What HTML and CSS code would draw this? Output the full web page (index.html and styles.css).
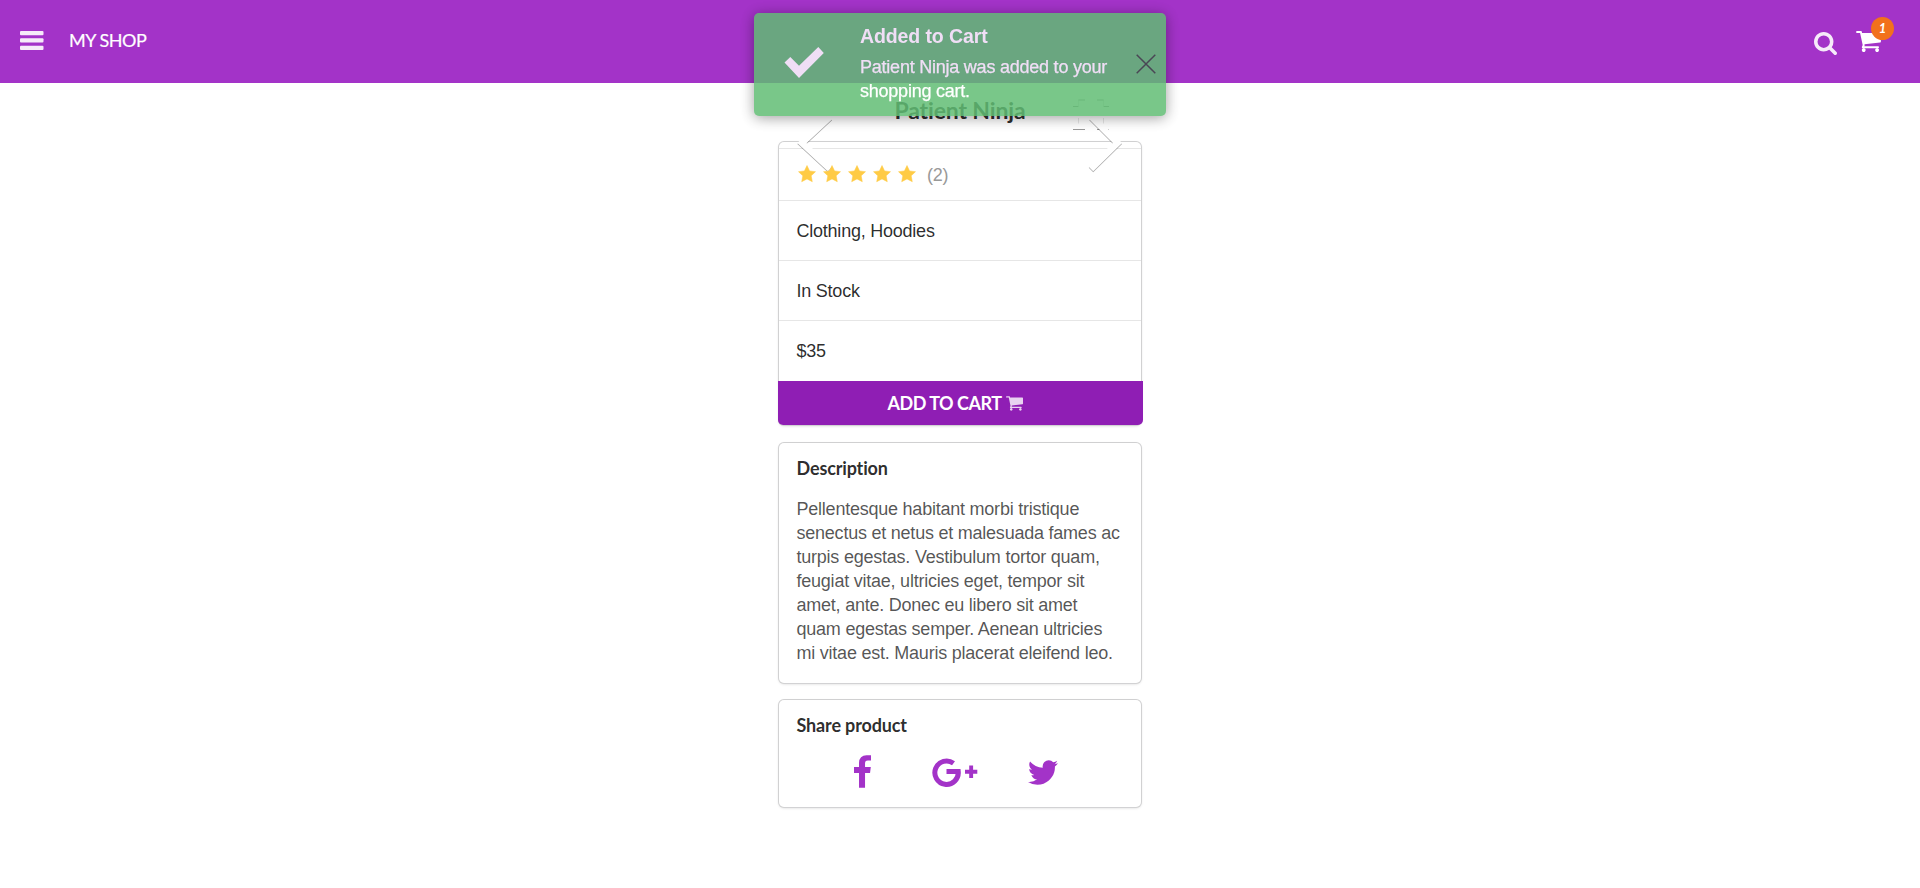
FILE: index.html
```html
<!DOCTYPE html>
<html lang="en">
<head>
<meta charset="utf-8">
<title>My Shop</title>
<link rel="stylesheet" href="styles.css">
</head>
<body>
<header class="topbar">
  <svg class="bars" viewBox="0 0 24 20"><rect y="0" width="23.5" height="4.3" rx="1"/><rect y="7.3" width="23.5" height="4.3" rx="1"/><rect y="14.8" width="23.5" height="4.3" rx="1"/></svg>
  <a class="brand">MY SHOP</a>
  <div class="actions">
    <svg class="search" viewBox="64 128 1664 1664"><path d="M1216 832q0-185-131.5-316.500t-316.500-131.500-316.500 131.500-131.500 316.500 131.500 316.500 316.500 131.500 316.500-131.500 131.500-316.500zm512 832q0 52-38 90t-90 38q-54 0-90-38l-343-342q-179 124-399 124-143 0-273.500-55.500t-225-150-150-225-55.500-273.500 55.500-273.500 150-225 225-150 273.500-55.500 273.500 55.500 225 150 150 225 55.500 273.500q0 220-124 399l343 343q37 37 37 90z"/></svg>
    <div class="cart">
      <svg viewBox="64 256 1664 1408"><path d="M704 1536q0 52-38 90t-90 38-90-38-38-90 38-90 90-38 90 38 38 90zm896 0q0 52-38 90t-90 38-90-38-38-90 38-90 90-38 90 38 38 90zm128-1088v512q0 24-16.500 42.500t-40.500 21.500l-1044 122q13 60 13 70 0 16-24 64h920q26 0 45 19t19 45-19 45-45 19h-1024q-26 0-45-19t-19-45q0-11 8-31.500t16-36 21.500-40 15.500-29.500l-177-823h-204q-26 0-45-19t-19-45 19-45 45-19h256q16 0 28.500 6.500t19.500 15.500 13 24.500 8 26 5.500 29.500 4.500 26h1201q26 0 45 19t19 45z"/></svg>
      <span class="badge">1</span>
    </div>
  </div>
</header>

<main class="product">
  <h2 class="title">Patient Ninja</h2>
  <section class="card">
    <div class="gallery">
      <svg class="gallery-nav" viewBox="0 0 366 80">
        <path class="corners" d="M298.700 11V1.700H308M320 1.700h9.300V11M298.700 22v9.300H308M320 31.300h9.300V22"/>
        <path class="arrow" d="M53 22L25 48L53 74"/>
        <path class="arrow" d="M314.500 22L340.500 48L314 74"/>
      </svg>
    </div>
    <div class="row rating">
      <svg class="stars" viewBox="0 0 120 18"><defs><path id="star" d="M9 .5l2.600 5.400 5.900.8-4.300 4.100 1.100 5.900L9 13.900l-5.300 2.800 1.100-5.900L.5 6.700l5.900-.8z"/></defs><use href="#star"/><use href="#star" x="25"/><use href="#star" x="50"/><use href="#star" x="75"/><use href="#star" x="100"/></svg>
      <span class="count">(2)</span>
    </div>
    <div class="row">Clothing, Hoodies</div>
    <div class="row">In Stock</div>
    <div class="row price">$35</div>
    <button class="add">ADD TO CART <svg viewBox="64 256 1664 1408"><path d="M704 1536q0 52-38 90t-90 38-90-38-38-90 38-90 90-38 90 38 38 90zm896 0q0 52-38 90t-90 38-90-38-38-90 38-90 90-38 90 38 38 90zm128-1088v512q0 24-16.500 42.500t-40.500 21.500l-1044 122q13 60 13 70 0 16-24 64h920q26 0 45 19t19 45-19 45-45 19h-1024q-26 0-45-19t-19-45q0-11 8-31.500t16-36 21.500-40 15.500-29.500l-177-823h-204q-26 0-45-19t-19-45 19-45 45-19h256q16 0 28.500 6.500t19.500 15.500 13 24.500 8 26 5.500 29.500 4.500 26h1201q26 0 45 19t19 45z"/></svg></button>
  </section>

  <section class="card description">
    <h3>Description</h3>
    <p>Pellentesque habitant morbi tristique<br>senectus et netus et malesuada fames ac<br>turpis egestas. Vestibulum tortor quam,<br>feugiat vitae, ultricies eget, tempor sit<br>amet, ante. Donec eu libero sit amet<br>quam egestas semper. Aenean ultricies<br>mi vitae est. Mauris placerat eleifend leo.</p>
  </section>

  <section class="card share">
    <h3>Share product</h3>
    <div class="networks">
      <svg class="facebook" viewBox="479 0 864 1664"><path d="M1343 12v264h-157q-86 0-116 36t-30 108v189h293l-39 296h-254v759h-306v-759h-255v-296h255v-218q0-186 104-288.500t277-102.500q147 0 228 12z"/></svg>
      <svg class="google" viewBox="0 0 46 30"><path class="ring" d="M21.500 6.300A11.700 11.700 0 1 0 26.200 14.500H15"/><path d="M14.500 12h13.600v5H14.500zM33 12.800h4.200V8.500h3.900v4.300h4.200v3.900h-4.200V21h-3.900v-4.300H33z"/></svg>
      <svg class="twitter" viewBox="108 256 1576 1280"><path d="M1684 408q-67 98-162 167 1 14 1 42 0 130-38 259.500t-115.500 248.500-184.500 210.500-258 146-323 54.500q-271 0-496-145 35 4 78 4 225 0 401-138-105-2-188-64.500t-114-159.500q33 5 61 5 43 0 85-11-112-23-185.500-111.500t-73.500-205.500v-4q68 38 146 41-66-44-105-115t-39-154q0-88 44-163 121 149 294.500 238.500t371.500 99.500q-8-38-8-74 0-134 94.500-228.500t228.500-94.500q140 0 236 102 109-21 205-78-37 115-142 178 93-10 186-50z"/></svg>
    </div>
  </section>
</main>

<aside class="toast">
  <svg class="check" viewBox="0 0 40 32"><path d="M.5 15.500L6.300 10l8.700 8.700L34.300 0l5.500 6L15 31z"/></svg>
  <div class="message">
    <strong>Added to Cart</strong>
    <p>Patient Ninja was added to your<br>shopping cart.</p>
  </div>
  <svg class="close" viewBox="0 0 20 20"><path d="M.7.700l18.600 18.600M19.300.7L.7 19.300"/></svg>
</aside>
</body>
</html>
```
FILE: styles.css
```css
* { box-sizing: border-box; }
body {
  margin: 0;
  height: 888px;
  overflow: hidden;
  background: #fff;
  color: rgba(0, 0, 0, .84);
  font-family: "Liberation Sans", Arial, sans-serif;
  font-size: 18px;
  letter-spacing: -.23px;
  font-variant-ligatures: none;
}
svg { display: block; flex: none; overflow: visible; }
h2, h3, p { margin: 0; }

.topbar {
  height: 83px;
  padding: 0 26px 0 20px;
  display: flex;
  align-items: center;
  background: #a333c8;
  color: #fff;
}
.bars { width: 24px; height: 20px; fill: #fff; opacity: .9; margin-top: -1px; }
.brand { margin: -3px 0 0 25px; font: 400 18px/24px Lato, sans-serif; letter-spacing: -.45px; -webkit-text-stroke: .2px #fff; }
.actions { margin-left: auto; display: flex; align-items: center; }
.search { width: 23px; height: 23px; margin: 3px 19px 0 0; fill: #fff; opacity: .9; }
.cart { position: relative; width: 38px; }
.cart svg { width: 25px; height: 21px; fill: #fff; }
.badge {
  position: absolute;
  left: 15px;
  top: -14px;
  width: 23px;
  height: 23px;
  border-radius: 50%;
  background: #f2711c;
  text-align: center;
  font: italic 700 13px/23px Lato, sans-serif;
}

.product { width: 362px; margin: 0 auto; }
.title {
  height: 59px;
  padding-top: 11px;
  text-align: center;
  font: 700 23px/32px Lato, sans-serif;
  letter-spacing: -.15px;
}
.card {
  margin-bottom: 18px;
  border-radius: 5px;
  background: #fff;
  box-shadow: 0 1px 3px 0 #d4d4d5, 0 0 0 1px #d0d0d1;
}
.gallery { position: relative; height: 6px; }
.gallery-nav {
  position: absolute;
  left: -2px;
  top: -47px;
  width: 366px;
  height: 80px;
  fill: none;
  stroke: #fff;
}
.arrow { stroke-width: 6.4; filter: drop-shadow(0 1px .5px rgba(0, 0, 0, .34)); }
.corners { stroke-width: 5.4; filter: drop-shadow(0 1px .7px rgba(0, 0, 0, .4)); }
.row {
  height: 60px;
  padding: 2px 17.5px 0;
  display: flex;
  align-items: center;
  border-top: 1px solid #e6e6e6;
}
.rating { height: 52px; }
.price { height: 61px; padding-top: 1px; }
.stars { position: relative; width: 120px; height: 18px; margin: -3px 0 0 1.5px; fill: #ffcb45; stroke: #ffcb45; stroke-width: .5; stroke-linejoin: round; }
.count { margin-left: 9px; color: #999; }
.add {
  display: flex;
  justify-content: center;
  align-items: center;
  gap: 5px;
  width: 365px;
  height: 44px;
  margin-left: -1px;
  padding: 0 10px 1px 0;
  border: 0;
  border-radius: 0 0 5px 5px;
  background: #8f1eb4;
  color: #fff;
  font: 700 18px/24px Lato, sans-serif;
  letter-spacing: -.5px;
}
.add svg { width: 17px; height: 15px; margin-top: 2px; fill: #fff; opacity: .8; }

.card h3 { font: 700 18px/24px Lato, sans-serif; letter-spacing: -.15px; }
.description { height: 240px; margin-bottom: 17px; padding: 13px 17.5px; white-space: nowrap; }
.description p { margin-top: 17px; line-height: 24px; color: rgba(0, 0, 0, .68); }
.share { height: 107px; padding: 13px 17.5px; }
.networks { display: flex; align-items: center; height: 34px; margin-top: 18px; padding-left: 57.5px; fill: #a333c8; }
.facebook { width: 17px; height: 33px; margin-top: -2px; }
.google { width: 46px; height: 30px; margin-left: 61px; }
.ring { fill: none; stroke: #a333c8; stroke-width: 5; }
.twitter { width: 30px; height: 25px; margin-left: 50px; }

.toast {
  position: absolute;
  left: 754px;
  top: 13px;
  width: 412px;
  height: 103px;
  padding: 0 10px 0 30px;
  display: flex;
  border-radius: 5px;
  background: #60bd73;
  box-shadow: 0 2px 14px rgba(0, 0, 0, .45);
  color: #fff;
  opacity: .84;
}
.check { width: 40px; height: 32px; margin-top: 34px; fill: #fff; }
.message { margin: 11px 0 0 36px; line-height: 24px; }
.message p { -webkit-text-stroke: .25px #fff; }
.message strong { display: block; font-size: 19.5px; line-height: 24px; margin-bottom: 7px; letter-spacing: -.1px; }
.close { width: 20px; height: 20px; margin: 41px 0 0 auto; fill: none; stroke: #3a4a40; stroke-width: 1.500; }
```
